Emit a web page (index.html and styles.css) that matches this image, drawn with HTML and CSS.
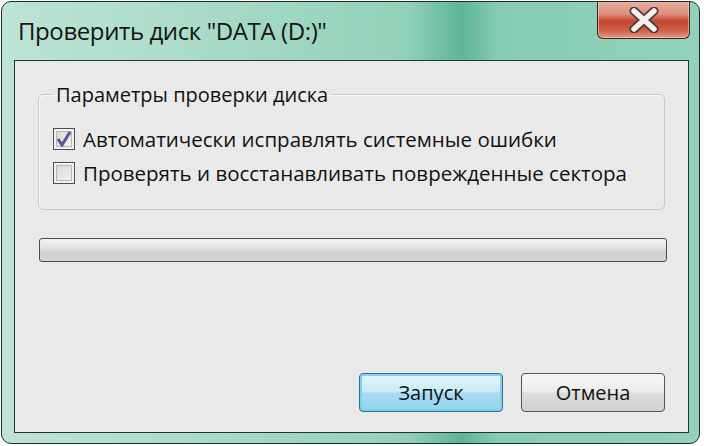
FILE: index.html
```html
<!DOCTYPE html>
<html lang="ru">

<head>
    <meta charset="UTF-8">
    <title>Проверить диск</title>
    <link rel="stylesheet" href="styles.css">
</head>

<body>
    <div class="window">
        <div class="titlebar">
            <span class="title">Проверить диск "DATA (D:)"</span>
            <button class="close-btn" type="button" aria-label="Закрыть">
                <svg width="40" height="26" viewBox="0 0 40 26">
                    <path d="M10 4 L30 22 M30 4 L10 22" stroke="#4a3a3a" stroke-width="9" stroke-linecap="round" />
                    <path d="M10 4 L30 22 M30 4 L10 22" stroke="#f4f0f0" stroke-width="5.5" stroke-linecap="round" />
                </svg>
            </button>
        </div>

        <div class="client">
            <fieldset class="group">
                <legend>Параметры проверки диска</legend>
                <label class="check-row">
                    <span class="check-box checked">
                        <svg width="16" height="16" viewBox="0 0 16 16">
                            <path d="M2 8 L6 14 L14 1" stroke="#55559e" stroke-width="3" fill="none" />
                        </svg>
                    </span>
                    Автоматически исправлять системные ошибки
                </label>
                <label class="check-row">
                    <span class="check-box"></span>
                    Проверять и восстанавливать поврежденные сектора
                </label>
            </fieldset>

            <div class="progress"><div class="progress-fill"></div></div>

            <div class="buttons">
                <button class="btn btn-default" type="button">Запуск</button>
                <button class="btn" type="button">Отмена</button>
            </div>
        </div>
    </div>
</body>

</html>
```

FILE: styles.css
```css
body {
    margin: 0;
    background-color: #fff;
    font-family: "Open Sans", "Noto Sans", sans-serif;
    color: #111;
}

.window {
    margin: 1px 0 0 1px;
    width: 699px;
    height: 443px;
    box-sizing: border-box;
    border: 1px solid #1e2a26;
    border-radius: 10px;
    background: linear-gradient(90deg, #bde4d5 0%, #a8dbc7 30%, #92d1b9 58%, #5db597 66%, #86ccb2 71%, #92d2bb 100%);
    display: flex;
    flex-direction: column;
    overflow: hidden;
}

.titlebar {
    height: 58px;
    display: flex;
    justify-content: space-between;
    align-items: flex-start;
    padding: 0 9px 0 16px;
}

.title {
    font-size: 24px;
    margin-top: 12px;
    color: #151515;
    letter-spacing: -0.4px;
}

.close-btn {
    width: 93px;
    height: 38px;
    margin-top: -1px;
    border: 1px solid #3b2622;
    border-top: none;
    border-radius: 0 0 6px 6px;
    background: linear-gradient(180deg, #e8b0a2 0%, #dc8f7c 35%, #c5442c 55%, #d0614a 80%, #e49a86 100%);
    box-shadow: inset 0 0 0 1px rgba(255, 220, 210, 0.5);
    display: flex;
    align-items: center;
    justify-content: center;
    padding: 0;
}

.client {
    flex: 1;
    margin: 0 10px 10px 12px;
    border: 1px solid #233;
    background-color: #eae9e9;
    display: flex;
    flex-direction: column;
}

.group {
    margin: 20px 0 0 23px;
    width: 627px;
    height: 129px;
    box-sizing: border-box;
    border: 1px solid #c9c9c9;
    border-radius: 5px;
    box-shadow: inset 1px 1px 0 #f8f8f8;
    padding: 14px 0 0 14px;
}

.group legend {
    font-size: 20px;
    padding: 0 3px;
}

.check-row {
    display: flex;
    align-items: center;
    gap: 8px;
    font-size: 20.5px;
    height: 34px;
}

.check-box {
    width: 22px;
    height: 22px;
    box-sizing: border-box;
    border: 1px solid #4e4e4e;
    background: linear-gradient(135deg, #d4d4d4, #f6f6f6);
    box-shadow: inset 0 0 0 2px #f2f2f2, inset 0 0 0 3px #b6b6b6;
    display: flex;
    align-items: center;
    justify-content: center;
}

.progress {
    margin: 28px 0 0 24px;
    width: 628px;
    height: 24px;
    box-sizing: border-box;
    border: 1px solid #4a4a4a;
    border-radius: 3px;
    background: linear-gradient(180deg, #f4f4f4 0%, #e2e2e2 40%, #cfcfcf 60%, #d6d6d6 100%);
}

.buttons {
    margin-top: auto;
    display: flex;
    justify-content: flex-end;
    gap: 18px;
    padding: 0 23px 20px 0;
}

.btn {
    width: 144px;
    height: 39px;
    border: 1px solid #555;
    border-radius: 4px;
    background: linear-gradient(180deg, #f6f6f6 0%, #ececec 48%, #dcdcdc 52%, #d2d2d2 100%);
    font-family: "Open Sans", "Noto Sans", sans-serif;
    font-size: 20px;
    color: #111;
    padding: 0;
}

.btn-default {
    border-color: #3a6f8c;
    background: linear-gradient(180deg, #e6f5fb 0%, #c8ebf8 48%, #a7dcf1 52%, #93d3ee 100%);
    box-shadow: inset 0 0 0 2px #7fd0ee;
}
```
